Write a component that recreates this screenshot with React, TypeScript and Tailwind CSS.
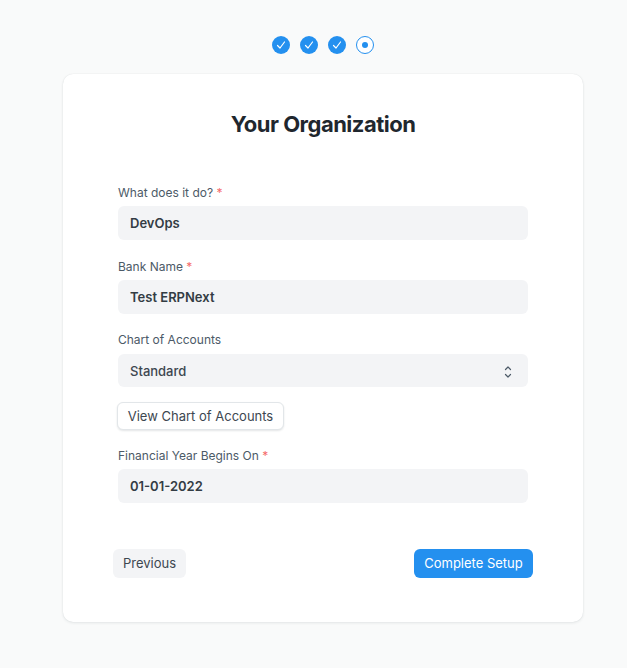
function Req() {
  return <span className="text-[#f56b6b]"> *</span>;
}

function Field({ label, value, required }: { label: string; value: string; required?: boolean }) {
  return (
    <div>
      <div className="text-[12px] leading-[18px] text-[#4c5a67] mb-[4px]">
        {label}
        {required && <Req />}
      </div>
      <div className="h-[34px] rounded-[6px] bg-[#f3f4f6] px-3 pt-px flex items-center text-[13px] font-semibold text-[#333c44]">
        {value}
      </div>
    </div>
  );
}

function Check() {
  return (
    <div className="w-[18px] h-[18px] rounded-full bg-[#2490ef] flex items-center justify-center">
      <svg width="10" height="10" viewBox="0 0 10 10" fill="none" stroke="white" strokeWidth="1.2" strokeLinecap="round" strokeLinejoin="round">
        <path d="M1.5 5.5 L4 8 L8.5 2" />
      </svg>
    </div>
  );
}

export default function App() {
  return (
    <div className="min-h-[668px] bg-[#f9fafa] pt-9 pl-[63px] font-['Inter',sans-serif]">
      <div className="w-[520px]">
        <div className="flex justify-center gap-[10px] h-[18px]">
          <Check />
          <Check />
          <Check />
          <div className="w-[18px] h-[18px] rounded-full border border-[#2490ef] bg-white flex items-center justify-center">
            <div className="w-[6px] h-[6px] rounded-full bg-[#2490ef]" />
          </div>
        </div>

        <div className="mt-[20px] h-[548px] bg-white rounded-[10px] shadow-[0_0_1px_rgba(25,39,52,0.12),0_1px_3px_rgba(25,39,52,0.09)] pt-[34px] px-[50px]">
          <h1 className="text-center text-[22px] leading-[32px] font-bold tracking-[-0.023em] text-[#1f272e]">Your Organization</h1>

          <div className="mt-[44px] px-[5px]">
            <Field label="What does it do?" value="DevOps" required />
            <div className="mt-[18px]">
              <Field label="Bank Name" value="Test ERPNext" required />
            </div>
            <div className="mt-[17px]">
              <div className="text-[12px] leading-[18px] text-[#4c5a67] mb-[5px]">Chart of Accounts</div>
              <div className="h-[33px] rounded-[6px] bg-[#f3f4f6] pl-3 pr-[15px] pt-[2px] flex items-center justify-between text-[13px] font-medium text-[#3d4750]">
                Standard
                <svg width="10" height="16" viewBox="0 0 10 16" fill="none" stroke="#4c5a67" strokeWidth="1.2" strokeLinecap="round" strokeLinejoin="round">
                  <path d="M2.5 5.5 L5 3 L7.5 5.5" />
                  <path d="M2.5 10.5 L5 13 L7.5 10.5" />
                </svg>
              </div>
            </div>
            <button className="mt-[15px] block h-[28px] w-[167px] -ml-px pt-px rounded-[6px] bg-white border border-[#e2e6e9] shadow-[0_1px_2px_rgba(25,39,52,0.12)] text-[13px] text-[#3d4750]">
              View Chart of Accounts
            </button>
            <div className="mt-[17px]">
              <Field label="Financial Year Begins On" value="01-01-2022" required />
            </div>
          </div>

          <div className="mt-[46px] flex justify-between">
            <button className="h-[29px] w-[73px] rounded-[6px] bg-[#f3f4f6] text-[13px] text-[#3d4750]">Previous</button>
            <button className="h-[29px] w-[119px] rounded-[6px] bg-[#2490ef] text-[13px] text-white">Complete Setup</button>
          </div>
        </div>
      </div>
    </div>
  );
}
